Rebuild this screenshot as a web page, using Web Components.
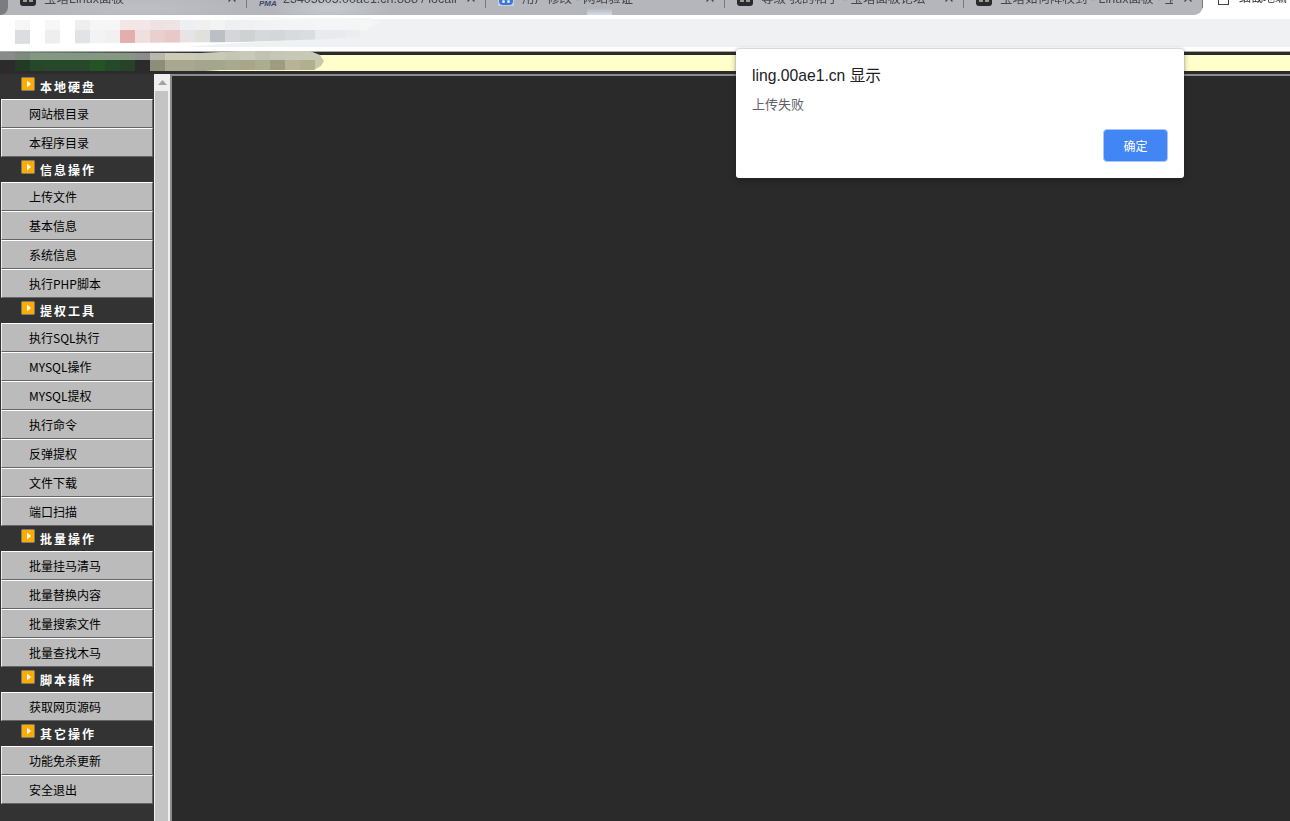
<!DOCTYPE html>
<html lang="zh-CN">
<head>
<meta charset="utf-8">
<title>上传失败</title>
<style>
html,body{margin:0;padding:0;height:100%;overflow:hidden;background:#fff}
body{font-family:"Liberation Sans","Noto Sans CJK SC",sans-serif}
</style>
</head>
<body>
<x-app>
  <x-tab-strip slot="tabs">
    <x-tab title-text="宝塔Linux面板" icon="bt"></x-tab>
    <x-tab title-text="23405805.00ae1.cn:888 / localh" icon="pma"></x-tab>
    <x-tab title-text="用户修改 - 网站验证" icon="blue"></x-tab>
    <x-tab title-text="等级 我的帖子 - 宝塔面板论坛" icon="bt"></x-tab>
    <x-tab title-text="宝塔如何降权到 - Linux面板 - 宝" icon="bt"></x-tab>
  </x-tab-strip>
  <x-address-bar slot="address"></x-address-bar>
  <x-notice-bar slot="notice"></x-notice-bar>
  <x-side-menu slot="menu">
    <x-menu-head>本地硬盘</x-menu-head>
    <x-menu-item>网站根目录</x-menu-item>
    <x-menu-item>本程序目录</x-menu-item>
    <x-menu-head>信息操作</x-menu-head>
    <x-menu-item>上传文件</x-menu-item>
    <x-menu-item>基本信息</x-menu-item>
    <x-menu-item>系统信息</x-menu-item>
    <x-menu-item>执行PHP脚本</x-menu-item>
    <x-menu-head>提权工具</x-menu-head>
    <x-menu-item>执行SQL执行</x-menu-item>
    <x-menu-item>MYSQL操作</x-menu-item>
    <x-menu-item>MYSQL提权</x-menu-item>
    <x-menu-item>执行命令</x-menu-item>
    <x-menu-item>反弹提权</x-menu-item>
    <x-menu-item>文件下载</x-menu-item>
    <x-menu-item>端口扫描</x-menu-item>
    <x-menu-head>批量操作</x-menu-head>
    <x-menu-item>批量挂马清马</x-menu-item>
    <x-menu-item>批量替换内容</x-menu-item>
    <x-menu-item>批量搜索文件</x-menu-item>
    <x-menu-item>批量查找木马</x-menu-item>
    <x-menu-head>脚本插件</x-menu-head>
    <x-menu-item>获取网页源码</x-menu-item>
    <x-menu-head>其它操作</x-menu-head>
    <x-menu-item>功能免杀更新</x-menu-item>
    <x-menu-item>安全退出</x-menu-item>
  </x-side-menu>
  <x-scroll-rail slot="rail"></x-scroll-rail>
  <x-content-pane slot="content"></x-content-pane>
  <x-top-mosaic slot="overlay"></x-top-mosaic>
  <x-alert-dialog slot="overlay" heading="ling.00ae1.cn 显示" message="上传失败" action="确定"></x-alert-dialog>
</x-app>
<script>
function shadow(el, html){ const r = el.attachShadow({mode:'open'}); r.innerHTML = html; return r; }

customElements.define('x-app', class extends HTMLElement{
  constructor(){ super(); shadow(this, `<style>
    :host{display:flex;flex-direction:column;position:relative;width:1290px;height:821px;overflow:hidden;background:#fff}
    .row{display:flex;flex:1;min-height:0;background:#333}
  </style>
  <slot name="tabs"></slot>
  <slot name="address"></slot>
  <slot name="notice"></slot>
  <div class="row"><slot name="menu"></slot><slot name="rail"></slot><slot name="content"></slot></div>
  <slot name="overlay"></slot>`); }
});

customElements.define('x-tab-strip', class extends HTMLElement{
  constructor(){ super(); shadow(this, `<style>
    :host{display:flex;flex:none;height:15px;overflow:hidden;background:#fff}
    .corner{flex:none;width:8px;background:#b0b2b7}
    .corner i{display:block;width:8px;height:15px;background:#7b7c80;border-bottom-right-radius:8px}
    .strip{display:flex;align-items:flex-end;width:1195px;flex:none;border-bottom-right-radius:9px;
      background:
        linear-gradient(to bottom,transparent 55%,#d3dce8 100%) 579px 0/25px 100% no-repeat,
        radial-gradient(ellipse 60px 14px at 322px 8px,rgba(205,210,215,.75),transparent 100%),
        radial-gradient(ellipse 100px 14px at 132px 8px,rgba(195,198,204,.6),transparent 100%),
        #b4b6bc}
    .after{flex:1;display:flex;align-items:flex-end;padding-left:15px;gap:10px;min-width:0}
    .box{flex:none;width:9px;height:12px;border:1px solid #444;margin-bottom:10px}
    .txt{font:12px/18px "Noto Sans CJK SC",sans-serif;color:#333;white-space:nowrap;margin-bottom:9px;filter:blur(.35px)}
  </style>
  <div class="corner"><i></i></div>
  <div class="strip"><slot></slot></div>
  <div class="after"><span class="box"></span><span class="txt">细截地编</span></div>`); }
});

customElements.define('x-tab', class extends HTMLElement{
  constructor(){ super();
    const ic = this.getAttribute('icon');
    const icons = {
      bt:`<svg width="16" height="16" viewBox="0 0 16 16"><rect width="16" height="16" rx="3" fill="#2a2a2c"/><rect x="3" y="9" width="4" height="3" fill="#9b9b9b"/><rect x="9" y="9" width="4" height="3" fill="#9b9b9b"/></svg>`,
      pma:`<span class="pma">PMA</span>`,
      blue:`<svg width="16" height="16" viewBox="0 0 16 16"><rect width="16" height="16" fill="#c8d0de"/><rect x="1" y="4" width="14" height="11" rx="4" fill="#3a78d8"/><rect x="4" y="10" width="3" height="3" rx="1.5" fill="#dbe6f6"/><rect x="9" y="10" width="3" height="3" rx="1.5" fill="#dbe6f6"/></svg>`
    };
    shadow(this, `<style>
      :host{display:flex;flex:none;position:relative;box-sizing:border-box;width:239px;height:34px;align-items:center;padding:0 30px 0 12px;gap:8px;color:#45474c}
      .ic{flex:none;position:relative;width:16px;height:16px}
      svg{display:block}
      .pma{position:absolute;left:0;top:10px;font:italic bold 8px/8px "Liberation Sans",sans-serif;color:#3e4a6a}
      .t{flex:1;min-width:0;padding-top:2px;font:12.5px/18px "Liberation Sans","Noto Sans CJK SC",sans-serif;white-space:nowrap;overflow:hidden;filter:blur(.4px)}
      .x{position:absolute;right:11px;top:13px;filter:blur(.3px)}
      .sep{position:absolute;right:0;bottom:7px;width:1px;height:18px;background:#77797e}
    </style>
    <span class="ic">${icons[ic]||''}</span>
    <span class="t">${this.getAttribute('title-text')}</span>
    <svg class="x" width="8" height="8" viewBox="0 0 8 8"><path d="M.5.5l7 7M7.5.5l-7 7" stroke="#3f4145" stroke-width="1.2"/></svg>
    <span class="sep"></span>`);
  }
});

customElements.define('x-address-bar', class extends HTMLElement{
  constructor(){ super(); shadow(this, `<style>
    :host{display:block;flex:none;height:28px;margin:4px 0;background:#f0f1f3}
  </style>`); }
});

customElements.define('x-notice-bar', class extends HTMLElement{
  constructor(){ super(); shadow(this, `<style>
    :host{display:block;flex:none;box-sizing:border-box;height:23px;border-top:1px solid #a9a9a9}
    .d{height:3px;background:#2b2b2b}
    .y{height:16px;background:#ffffcc}
  </style><div class="d"></div><div class="y"></div><div class="d"></div>`); }
});

customElements.define('x-side-menu', class extends HTMLElement{
  constructor(){ super(); shadow(this, `<style>
    :host{display:flex;flex-direction:column;flex:none;width:154px;background:#333;font:12px "Noto Sans CJK SC",sans-serif}
  </style><slot></slot>`); }
});

customElements.define('x-menu-head', class extends HTMLElement{
  constructor(){ super(); shadow(this, `<style>
    :host{display:flex;flex:none;box-sizing:border-box;height:25px;padding-left:21px;gap:5px;background:#333;color:#fff;
      font:bold 12px/25px "Noto Sans CJK SC",sans-serif;letter-spacing:2px}
    .ic{flex:none;margin-top:3px;display:block}
  </style>
  <svg class="ic" width="14" height="14" viewBox="0 0 14 14"><rect x=".5" y=".5" width="13" height="13" rx="1" fill="#fdab00" stroke="#7f7a6e"/><path d="M6 3.5v7l4-3.5z" fill="#fff"/></svg>
  <span class="t"><slot></slot></span>`); }
});

customElements.define('x-menu-item', class extends HTMLElement{
  constructor(){ super(); shadow(this, `<style>
    :host{display:block;flex:none;box-sizing:border-box;height:29px;margin-left:1px;width:152px;padding-left:27px;
      background:#bbb;color:#000;border:1px solid;border-color:#fff #666 #666 #eee;
      font:12px/27px "Noto Sans CJK SC",sans-serif;white-space:nowrap}
  </style><slot></slot>`); }
});

customElements.define('x-scroll-rail', class extends HTMLElement{
  constructor(){ super(); shadow(this, `<style>
    :host{display:flex;flex-direction:column;flex:none;width:16px;background:#efefef}
    .btn{flex:none;height:17px;display:flex;align-items:center;justify-content:center}
    .thumb{flex:1;width:13px;margin-left:1px;background:#c4c4c4}
  </style>
  <div class="btn"><svg width="9" height="5" viewBox="0 0 9 5"><path d="M4.5 0L9 5H0z" fill="#a3a3a3"/></svg></div>
  <div class="thumb"></div>`); }
});

customElements.define('x-content-pane', class extends HTMLElement{
  constructor(){ super(); shadow(this, `<style>
    :host{display:block;flex:1;box-sizing:border-box;background:#2a2a2a;border-top:2px solid #8c8c8c;border-left:2px solid #8c8c8c}
  </style>`); }
});

customElements.define('x-top-mosaic', class extends HTMLElement{
  constructor(){ super();
    const a1=['#fff','#f6f6f6','#fff','#f7f7f7','#fff','#eeeeee','#f6f6f6','#f6f6f6','#f3e6e6','#f3e6e6','#f0e2e2','#f0e3e3','#eeeff3','#f0f0f1','#f2f4f4','#eef0f0','#eff1f3','#f1f2f2','#f2f3f3','#f3f4f4','#f3f4f4','#f4f5f5','#f4f5f5','#f5f5f6','#f5f6f6'];
    const a2=['#fff','#dcdde0','#fff','#eeeeef','#fff','#e2e3e6','#f3f3f4','#f1f1f2','#e5aeae','#efdfdf','#eacfd1','#e8c8c8','#e8e3e6','#e1e1dc','#bcbfc5','#d4d6d9','#cfd2d3','#d5d9dc','#d4d7da','#d8dbdd','#dadde0','#e8eaed','#e8eaed','#ebedf0'];
    const b1=['#8a8a8a','#7d8b7d','#849784','#849784','#849784','#849784','#849784','#849784','#849784','#8c8c8c','#b8b8ac','#cbcbb8','#cbcbb8','#c9c9b7','#c9c9b7','#c4c5b3','#c9c9b9','#c2c2b2','#c6c6b8','#c8c8b6','#c8c8b6','#c8c8b6'];
    const b2=['#2b2b2b','#233a27','#26472a','#274829','#274829','#274829','#235423','#264a29','#274229','#2b2b2b','#8e8e78','#a8a88e','#a8a88e','#a5a58c','#a3a78d','#a8a98e','#a9a588','#aaad90','#9d9c80','#b8b296','#b0b08f','#c8c9ab'];
    const cells=(arr,h)=>arr.map(c=>`<i style="background:${c};height:${h}px"></i>`).join('');
    shadow(this, `<style>
      :host{display:block;position:absolute;left:0;top:0;width:0;height:0}
      .white{position:absolute;left:0;top:15px;width:390px;height:36px;
        background:linear-gradient(to right,#fff 0,#fff 190px,#f6f7f8 300px,#f3f4f5 380px);
        clip-path:polygon(0 0,180px 0,300px 3px,370px 3px,380px 8px,370px 13px,345px 22px,240px 28px,170px 33px,130px 36px,0 36px)}
      .m{position:absolute;display:grid;grid-template-columns:repeat(auto-fill,15px)}
      .m i{display:block}
      .top{left:0;top:20px;width:375px;clip-path:polygon(0 0,360px 0,372px 4px,368px 9px,360px 17px,330px 19px,240px 22px,0 24px)}
      .low{left:0;top:51px;width:330px;clip-path:polygon(0 1px,200px 2px,240px 0,310px 0,320px 4px,324px 10px,321px 15px,314px 19px,220px 19px,205px 20px,0 20px)}
    </style>
    <div class="white"></div>
    <div class="m top">${cells(a1,10)}${cells(a2,14)}</div>
    <div class="m low">${cells(b1,9)}${cells(b2,11)}</div>`);
  }
});

customElements.define('x-alert-dialog', class extends HTMLElement{
  constructor(){ super(); shadow(this, `<style>
    :host{display:flex;flex-direction:column;position:absolute;left:736px;top:49px;width:448px;height:129px;box-sizing:border-box;padding:16px 16px 16px;
      background:#fff;border-radius:3px;box-shadow:0 0 2px rgba(60,64,67,.45),0 2px 6px rgba(0,0,0,.3);color:#202124}
    h1{margin:0;font:400 15.7px/22px "Liberation Sans","Noto Sans CJK SC",sans-serif}
    p{margin:8px 0 0;font:13px/17px "Noto Sans CJK SC",sans-serif;color:#5f6368}
    .foot{margin-top:auto;display:flex;justify-content:flex-end}
    button{box-sizing:border-box;width:65px;height:33px;padding:0;border:1px solid #a9c6f7;border-radius:4px;background:#4285f4;color:#fff;font:12px/31px "Noto Sans CJK SC",sans-serif}
  </style>
  <h1>${this.getAttribute('heading')}</h1>
  <p>${this.getAttribute('message')}</p>
  <div class="foot"><button>${this.getAttribute('action')}</button></div>`); }
});
</script>
</body>
</html>
